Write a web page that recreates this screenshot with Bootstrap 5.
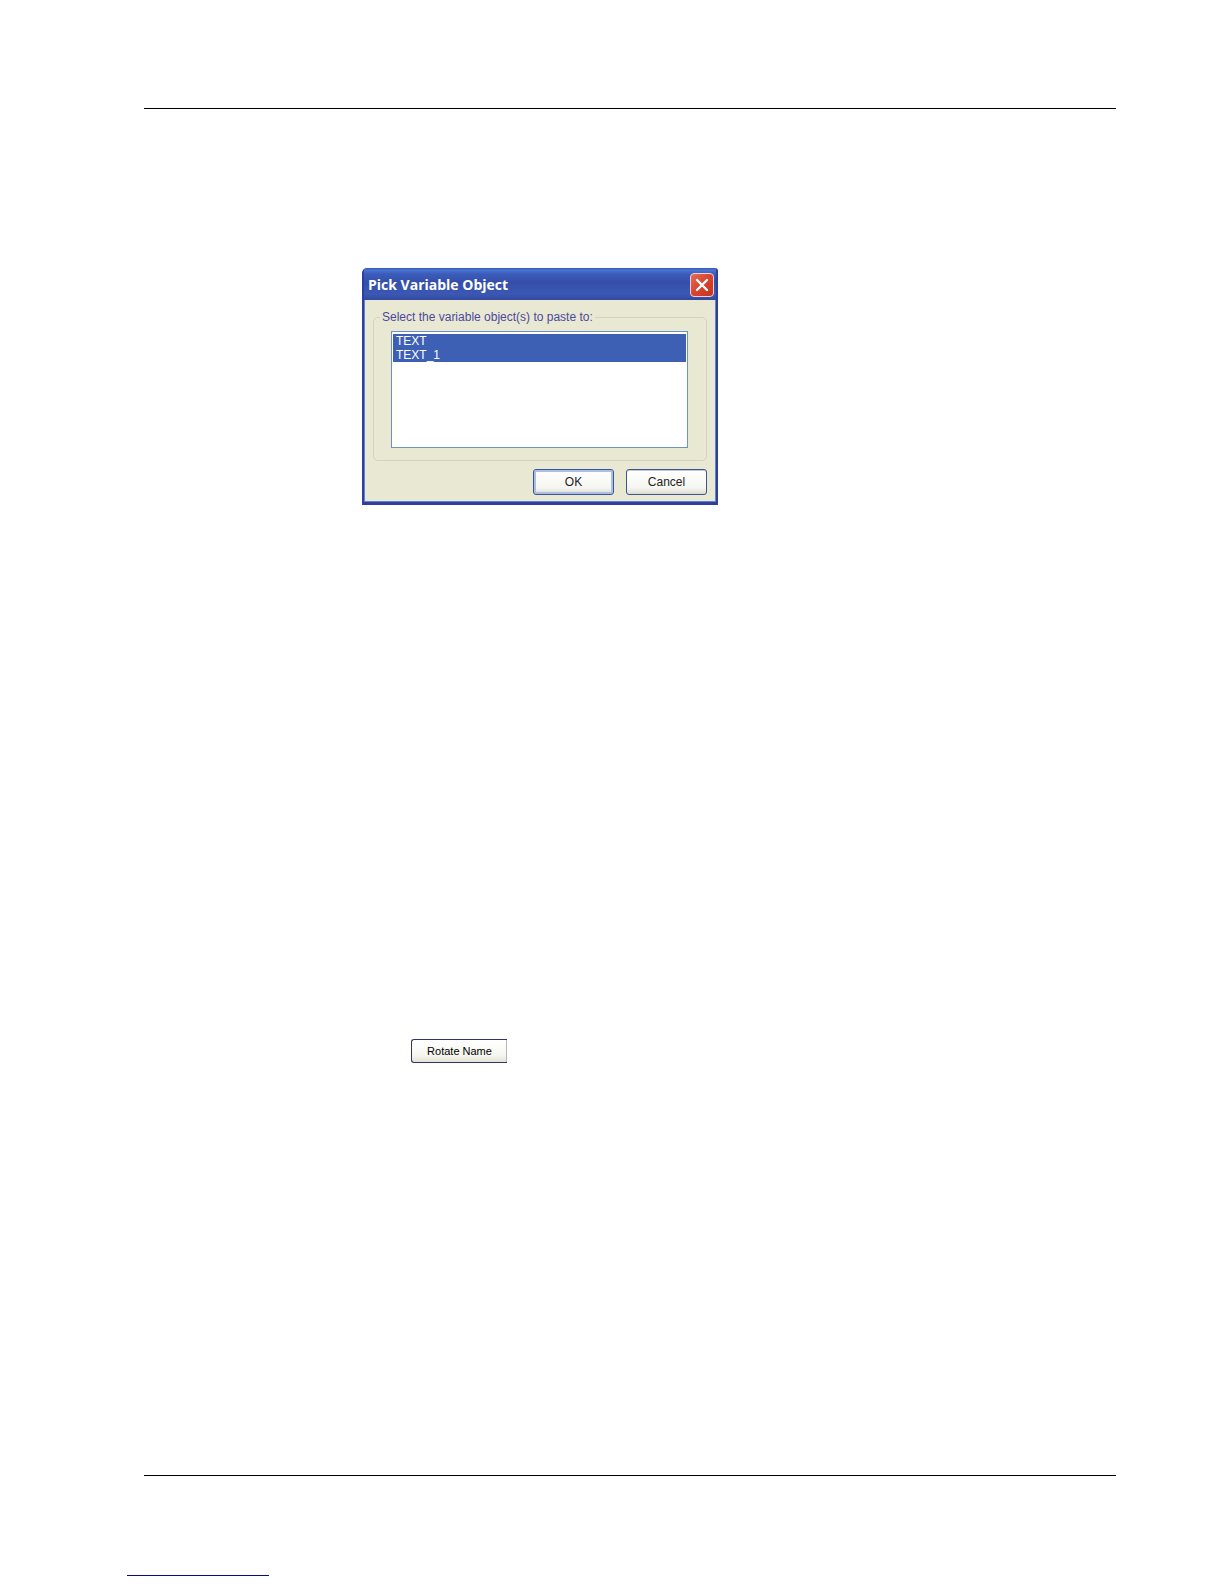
<!DOCTYPE html>
<html lang="en">
<head>
<meta charset="utf-8">
<meta name="viewport" content="width=device-width, initial-scale=1">
<title>Pick Variable Object</title>
<link href="https://cdn.jsdelivr.net/npm/bootstrap@5.3.0/dist/css/bootstrap.min.css" rel="stylesheet">
<style>
  body { background: #fff; font-family: "Liberation Sans", Arial, sans-serif; font-size: 12px; line-height: 16px; color: #000; }
  .sheet { min-height: 100vh; padding-top: 108px; }
  .sheet-body { margin: 0 108px 0 144px; min-height: 1368px; border-top: 1px solid #000; border-bottom: 1px solid #000; padding-top: 159px; }
  .sheet-foot { padding: 83px 0 8px 127px; }
  .foot-link { display: block; width: 142px; height: 17px; border-bottom: 1px solid #0a0a8c; }

  .xp-dialog { width: 356px; margin-left: 218px; background: #e9e8d2; border: solid #2f3f9f; border-width: 0 2px 3px; border-radius: 5px 3px 0 0; overflow: hidden; box-shadow: inset 1px 0 #5f83cf, inset -1px 0 #5f83cf, inset 0 -1px #5f83cf; }
  .xp-title { height: 32px; padding: 2px 2px 0 4px; background: linear-gradient(#3256b8 0, #4a74d2 2px, #3c5cba 6px, #344fa9 14px, #3b58b4 26px, #34489e 100%); }
  .xp-title h1 { margin: 0; font: bold 14px/20px "Open Sans", "Noto Sans", sans-serif; color: #fff; }
  .xp-close { width: 24px; height: 24px; padding: 0; border: 1px solid #f0cfd8; border-radius: 4px; background: linear-gradient(135deg, #e0705a, #d9432c 50%, #c2351f); }
  .xp-close svg { display: block; margin: auto; }
  .xp-content { padding: 9px 9px 7px; }
  .xp-group { border: 1px solid #d3d2bb; border-radius: 5px; padding: 6px 18px 12px 17px; margin: 0; }
  .xp-group legend { float: none; width: auto; margin: 0 0 0 -11px; padding: 0 2px; font-size: 12px; line-height: 16px; color: #4a4a9e; }
  .xp-list { display: block; width: 100%; height: 117px; padding: 2px 1px; border: 1px solid #6f93c0; border-radius: 0; background: #fff; overflow: hidden; appearance: none; outline: 0; font-size: 12px; }
  .xp-list option { height: 14px; min-height: 14px; padding: 0 3px; line-height: 14px; }
  .xp-list option:checked { background: #3d60b5 linear-gradient(#3d60b5, #3d60b5); -webkit-text-fill-color: #fff; }
  .xp-actions { padding-top: 8px; gap: 12px; }
  .xp-btn { width: 81px; height: 26px; padding: 0; border: 1px solid #3c5490; border-radius: 3px; background: linear-gradient(#fff, #f5f5f0 75%, #dddbd0); font-size: 12px; line-height: 16px; color: #222; box-shadow: inset 0 1px #c5c8d2; }
  .xp-default { box-shadow: inset 0 0 0 2px #a9bfe8; }
  .rotate { width: 96px; height: 24px; margin: 534px 0 0 267px; border-color: #33336b; border-right-width: 0; border-radius: 3px 0 0 3px; background: linear-gradient(#fff, #f6f6f0 70%, #e2e2d8); font-size: 11px; color: #000; box-shadow: inset -1px 0 #b8b8b0; }
</style>
<script src="https://cdn.jsdelivr.net/npm/bootstrap@5.3.0/dist/js/bootstrap.bundle.min.js"></script>
</head>
<body>
<div class="sheet d-flex flex-column">
  <main class="sheet-body">
    <section class="xp-dialog" role="dialog" aria-labelledby="dialog-title">
      <header class="xp-title d-flex align-items-center justify-content-between">
        <h1 id="dialog-title">Pick Variable Object</h1>
        <button class="xp-close" type="button" aria-label="Close">
          <svg width="16" height="16" viewBox="0 0 16 16" fill="none" stroke="#fff" stroke-width="2.4" stroke-linecap="round"><path d="M3 3l10 10M13 3L3 13"/></svg>
        </button>
      </header>
      <form class="xp-content">
        <fieldset class="xp-group">
          <legend><label for="objects">Select the variable object(s) to paste to:</label></legend>
          <select class="xp-list" id="objects" multiple size="8">
            <option selected>TEXT</option>
            <option selected>TEXT_1</option>
          </select>
        </fieldset>
        <div class="xp-actions d-flex justify-content-end">
          <button class="xp-btn xp-default" type="button">OK</button>
          <button class="xp-btn" type="button">Cancel</button>
        </div>
      </form>
    </section>
    <button class="xp-btn rotate d-block" type="button">Rotate Name</button>
  </main>
  <footer class="sheet-foot">
    <a class="foot-link" href="#" aria-label="Home page"></a>
  </footer>
</div>
</body>
</html>
